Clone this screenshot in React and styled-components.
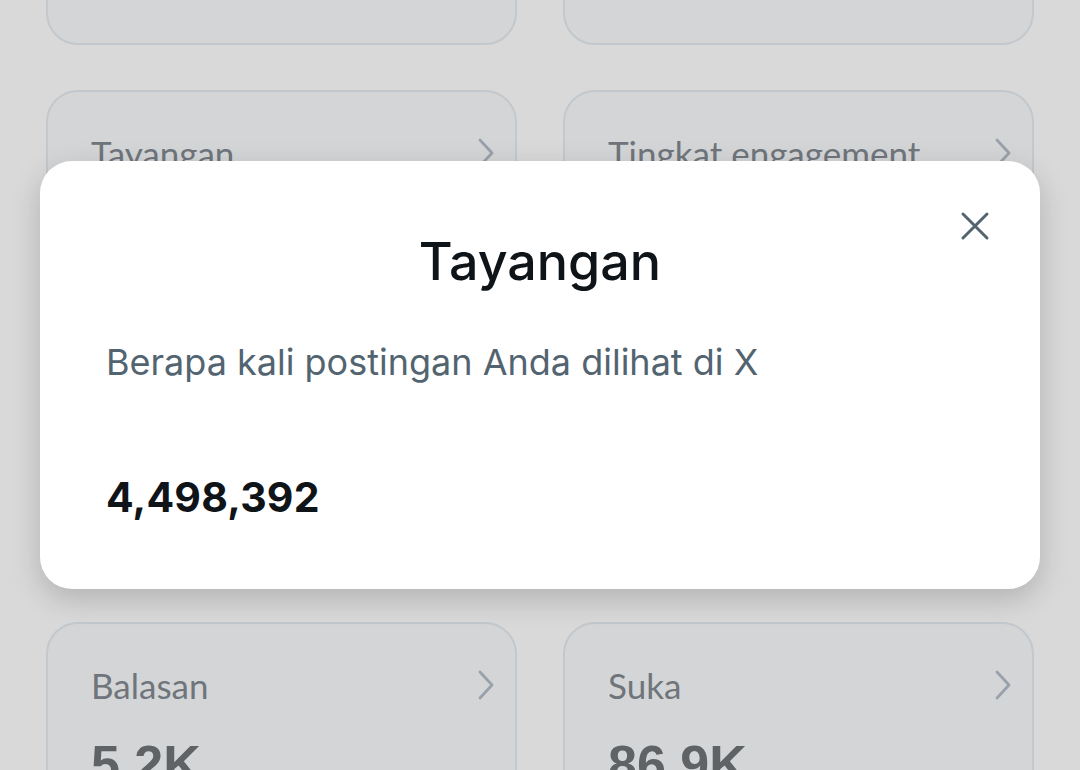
import styled, { createGlobalStyle } from "styled-components";

const GlobalStyle = createGlobalStyle`
  html, body {
    margin: 0;
    padding: 0;
    background: #ffffff;
    overflow: hidden;
  }
  body {
    font-family: Inter, "Liberation Sans", sans-serif;
  }
`;

const stats = [
  { label: "", value: "" },
  { label: "", value: "" },
  { label: "Tayangan", value: "4.4M" },
  { label: "Tingkat engagement", value: "2.1%" },
  { label: "Balasan", value: "5.2K" },
  { label: "Suka", value: "86.9K" },
];

const Chevron = () => (
  <svg width="18" height="30" viewBox="0 0 18 30" fill="none">
    <path d="M3 2l12 13L3 28" stroke="#b4bec8" strokeWidth="2.8" strokeLinecap="round" strokeLinejoin="round" />
  </svg>
);

const CloseIcon = () => (
  <svg width="30" height="30" viewBox="0 0 30 30" fill="none">
    <path d="M3 3l24 24M27 3L3 27" stroke="#536471" strokeWidth="3" strokeLinecap="round" />
  </svg>
);

const App = () => {
  return (
    <>
      <GlobalStyle />
      <Page>
        <Grid>
          {stats.map((s, i) => (
            <Card key={i}>
              {s.label && (
                <>
                  <CardHead>
                    <CardLabel>{s.label}</CardLabel>
                    <Chevron />
                  </CardHead>
                  <CardValue>{s.value}</CardValue>
                </>
              )}
            </Card>
          ))}
        </Grid>
        <Overlay>
          <Modal>
            <CloseButton aria-label="Tutup">
              <CloseIcon />
            </CloseButton>
            <Title>Tayangan</Title>
            <Description>Berapa kali postingan Anda dilihat di X</Description>
            <Total>4,498,392</Total>
          </Modal>
        </Overlay>
      </Page>
    </>
  );
};

const Page = styled.div`
  position: relative;
  width: 1080px;
  height: 770px;
  overflow: hidden;
`;

const Grid = styled.div`
  display: grid;
  grid-template-columns: 471px 471px;
  column-gap: 46px;
  row-gap: 45px;
  padding: 0 46px;
  margin-top: -442px;
`;

const Card = styled.div`
  box-sizing: border-box;
  height: 487px;
  border: 2px solid #e6ebf0;
  border-radius: 32px;
  background: #f9fbfd;
  padding: 40px 20px 0 43px;
`;

const CardHead = styled.div`
  display: flex;
  align-items: center;
  justify-content: space-between;
`;

const CardLabel = styled.span`
  font-family: Lato, "Liberation Sans", sans-serif;
  font-size: 35px;
  color: #838a91;
`;

const CardValue = styled.div`
  margin-top: 28px;
  font-family: "Liberation Sans", Arial, sans-serif;
  font-weight: 700;
  font-size: 52px;
  color: #707578;
`;

const Overlay = styled.div`
  position: absolute;
  inset: 0;
  background: rgba(0, 0, 0, 0.15);
`;

const Modal = styled.div`
  position: absolute;
  left: 40px;
  top: 161px;
  box-sizing: border-box;
  width: 1000px;
  height: 428px;
  background: #ffffff;
  border-radius: 32px;
  box-shadow: 0 10px 30px rgba(0, 0, 0, 0.18);
  padding: 66px 66px 0;
  display: flex;
  flex-direction: column;
`;

const CloseButton = styled.button`
  position: absolute;
  top: 50px;
  right: 50px;
  width: 30px;
  height: 30px;
  padding: 0;
  border: none;
  background: none;
  display: flex;
  align-items: center;
  justify-content: center;
`;

const Title = styled.h2`
  margin: 0;
  text-align: center;
  font-size: 52px;
  font-weight: 500;
  color: #0f1419;
  line-height: 70px;
`;

const Description = styled.p`
  margin: 42px 0 0;
  font-size: 36px;
  color: #536471;
  line-height: 46px;
`;

const Total = styled.div`
  margin-top: 87px;
  font-weight: 700;
  font-size: 41px;
  letter-spacing: 0.2px;
  color: #0f1419;
  line-height: 50px;
`;

export default App;
